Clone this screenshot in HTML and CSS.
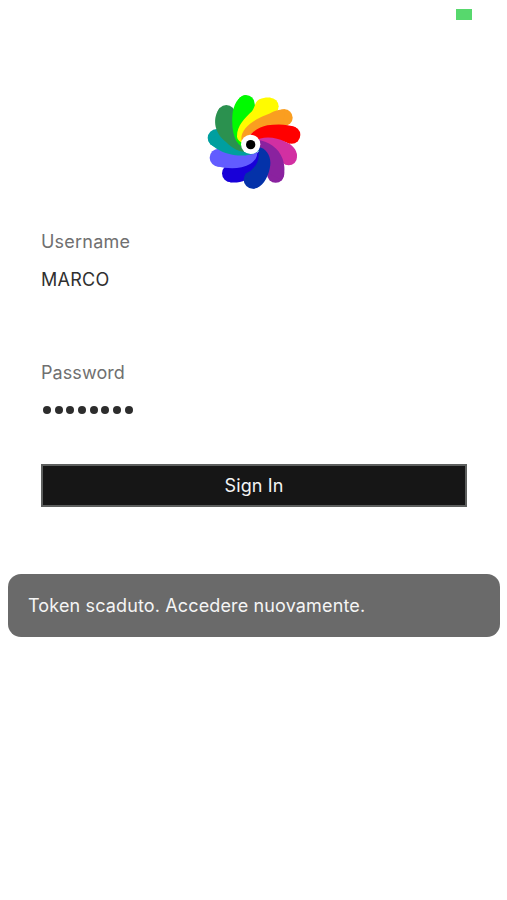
FILE: index.html
```html
<!DOCTYPE html>
<html lang="it">
<head>
<meta charset="utf-8">
<title>Sign In</title>
<link rel="stylesheet" href="styles.css">
</head>
<body>
<header class="status"><span class="battery"></span></header>
<main>
<svg class="logo" viewBox="0 0 324 324" aria-hidden="true">
<g fill="#1800d8"><circle cx="93" cy="256" r="27"/><path d="M76 235C90 242 130 237 165 200L184 184C184 228 168 262 137 276C122 283 106 285 90 283Z"/></g>
<g fill="#625cff"><circle cx="56" cy="209" r="27"/><path d="M61 182C95 202 130 200 170 185C178 210 157 230 125 238C98 244 72 240 50 235Z"/></g>
<g fill="#009f9f"><circle cx="50" cy="150" r="27"/><path d="M69 131C88 160 110 182 151 184L178 187C166 200 126 208 88 198C58 190 34 174 25 158Z"/></g>
<g fill="#2b914f"><circle cx="79" cy="78" r="27"/><path d="M106 77L120 110L135 165L151 185C142 200 105 190 78 162C39 132 38 87 59 60Z"/></g>
<g fill="#00fa00"><circle cx="138" cy="47" r="26"/><path d="M97 85C99 50 115 25 136 21L170 56C145 83 125 119 130 163L143 182C111 178 94 145 97 85Z"/></g>
<g fill="#fffb00"><circle cx="210" cy="55" r="26"/><path d="M111 145C111 112 135 90 156 70C166 54 165 41 178 34C190 29 200 28 212 29L225 80C170 87 135 120 135 166C118 163 111 154 111 145Z"/></g>
<g fill="#fa9e20"><circle cx="253" cy="89" r="25"/><path d="M124 152C124 122 158 96 198 81C214 76 224 65 256 64L248 114C188 112 147 132 131 162C126 160 124 156 124 152Z"/></g>
<g fill="#f00"><circle cx="275" cy="141" r="26"/><path d="M143 151C153 132 178 117 202 112C232 108 262 108 287 118L270 167C230 152 200 154 168 166Z"/></g>
<g fill="#d22fa2"><circle cx="266" cy="207" r="25"/><path d="M160 160C184 144 225 144 257 162C279 171 291 186 291 204L247 224C235 202 213 185 176 176Z"/></g>
<g fill="#8a229f"><circle cx="227" cy="258" r="26"/><path d="M170 156C205 158 237 181 248 213C255 235 256 255 246 275L201 254C209 209 194 187 168 173Z"/></g>
<g fill="#0432a9"><circle cx="158" cy="275" r="27"/><path d="M176 177C202 181 217 211 209 242C203 272 185 300 160 302L134 261C158 247 175 229 176 205Z"/></g>
<circle cx="152" cy="169" r="29" fill="#fff"/>
<circle cx="152" cy="170" r="14" fill="#000"/>
</svg>
<form class="login">
<div class="field"><span class="label">Username</span><span class="value">MARCO</span></div>
<div class="field"><span class="label label-wide">Password</span><span class="dots"><i></i><i></i><i></i><i></i><i></i><i></i><i></i><i></i></span></div>
<button class="submit" type="button">Sign In</button>
</form>
<div class="toast">Token scaduto. Accedere nuovamente.</div>
</main>
</body>
</html>
```
FILE: styles.css
```css
* { box-sizing: border-box; }
body { margin: 0; min-height: 900px; background: #fff; font-family: Inter, "Liberation Sans", sans-serif; font-size: 18px; line-height: 24px; }
.status { height: 88px; padding: 9px 35px 0; display: flex; justify-content: flex-end; align-items: flex-start; }
.battery { width: 16px; height: 11px; background: #57d86d; }
main { display: flex; flex-direction: column; }
.logo { width: 108px; height: 108px; margin-left: 200px; }
.login { display: flex; flex-direction: column; margin: 34px 40px 0 41px; }
.field { display: flex; flex-direction: column; height: 131px; gap: 13px; }
.label { color: #707070; letter-spacing: .22px; }
.label-wide { letter-spacing: .08px; }
.value { color: #303030; letter-spacing: .25px; padding-top: 1px; }
.dots { display: flex; gap: 3.7px; height: 24px; align-items: center; padding-left: 2px; }
.dots i { width: 8px; height: 8px; border-radius: 50%; background: #2d2d2d; }
.submit { height: 43px; margin-top: -28px; border: 2px solid #5d5f5e; background: #161616; color: #f4f4f4; font: inherit; letter-spacing: .1px; padding: 0; }
.toast { margin: 67px 7px 0 8px; height: 63px; padding: 0 20px; display: flex; align-items: center; border-radius: 13px; background: #6a6a6a; color: #f5f5f5; letter-spacing: .14px; }
```
